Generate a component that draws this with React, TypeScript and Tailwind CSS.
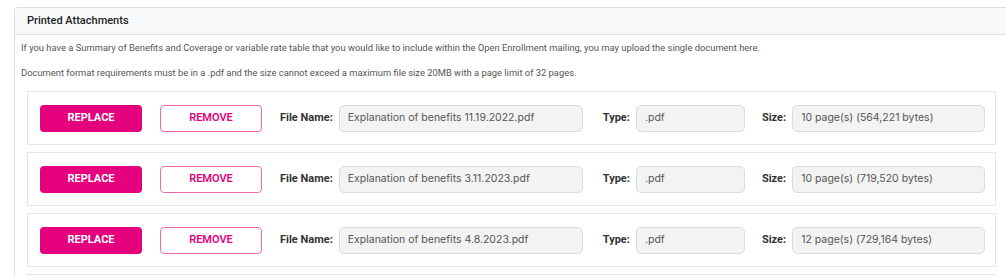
import React from 'react';

interface Attachment {
  fileName: string;
  type: string;
  size: string;
}

const attachments: Attachment[] = [
  { fileName: 'Explanation of benefits 11.19.2022.pdf', type: '.pdf', size: '10 page(s) (564,221 bytes)' },
  { fileName: 'Explanation of benefits 3.11.2023.pdf', type: '.pdf', size: '10 page(s) (719,520 bytes)' },
  { fileName: 'Explanation of benefits 4.8.2023.pdf', type: '.pdf', size: '12 page(s) (729,164 bytes)' },
];

const Field: React.FC<{ label: string; value: string; labelClass: string; boxClass: string }> = ({
  label,
  value,
  labelClass,
  boxClass,
}) => (
  <div className={`flex shrink-0 items-center ${labelClass}`}>
    <span className="whitespace-nowrap text-[11px] font-bold text-[#333] [font-family:Roboto,sans-serif]">
      {label}
    </span>
    <div
      className={`ml-[6px] flex h-[27px] shrink-0 items-center whitespace-nowrap rounded-[5px] border border-[#dcdcdc] bg-[#f3f3f3] px-[8px] text-[10.5px] text-[#555] [font-family:Inter,sans-serif] ${boxClass}`}
    >
      {value}
    </div>
  </div>
);

const AttachmentRow: React.FC<{ item: Attachment }> = ({ item }) => (
  <div className="flex h-[54px] items-center border border-[#e6e6e6] bg-white pl-[12px]">
    <button className="h-[27px] w-[102px] shrink-0 rounded-[4px] bg-[#e5007e] text-[11px] font-bold text-white [font-family:Roboto,sans-serif]">
      REPLACE
    </button>
    <button className="ml-[18px] h-[27px] w-[102px] shrink-0 rounded-[4px] border border-[#f06aaa] bg-white text-[11px] font-semibold text-[#e5007e] [font-family:Roboto,sans-serif]">
      REMOVE
    </button>
    <Field label="File Name:" value={item.fileName} labelClass="ml-[18px]" boxClass="w-[244px]" />
    <Field label="Type:" value={item.type} labelClass="ml-[20px]" boxClass="w-[109px]" />
    <Field label="Size:" value={item.size} labelClass="ml-[17px]" boxClass="w-[193px]" />
  </div>
);

export default function App() {
  return (
    <div className="h-[276px] w-[1006px] overflow-hidden bg-white pl-[14px] pt-[7px]">
      <div className="rounded-tl-[4px] border border-r-0 border-[#dedede]">
        <div className="flex h-[27px] items-center border-b border-[#dedede] bg-[#f8f9fb] pl-[12px] text-[11px] font-medium text-[#222] [font-family:Roboto,sans-serif]">
          Printed Attachments
        </div>
        <div className="pl-[6px] pt-[6px] text-[9.4px] text-[#555] [font-family:Roboto,sans-serif]">
          <p className="leading-[14px]">
            If you have a Summary of Benefits and Coverage or variable rate table that you would like to include within the Open Enrollment mailing, you may upload the single document here.
          </p>
          <p className="mt-[11px] leading-[14px]">
            Document format requirements must be in a .pdf and the size cannot exceed a maximum file size 20MB with a page limit of 32 pages.
          </p>
        </div>
        <div className="flex w-[981px] flex-col gap-[7px] pl-[12px] pt-[11px]">
          {attachments.map((a) => (
            <AttachmentRow key={a.fileName} item={a} />
          ))}
          <div className="h-[54px] border border-[#e6e6e6] bg-white" />
        </div>
      </div>
    </div>
  );
}
